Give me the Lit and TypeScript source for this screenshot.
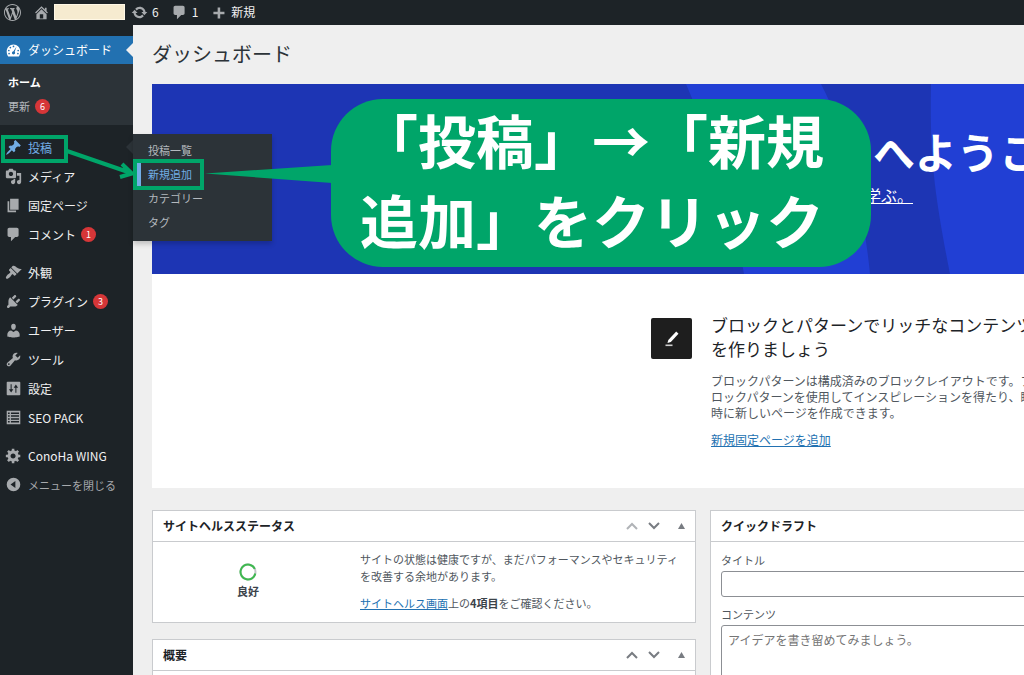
import { LitElement, html, svg, css, nothing } from "lit";
import { customElement, property } from "lit/decorators.js";
import { classMap } from "lit/directives/class-map.js";

const ICONS: Record<string, string> = {
  wordpress:
    "M20 10c0-5.51-4.49-10-10-10C4.48 0 0 4.49 0 10c0 5.52 4.48 10 10 10 5.51 0 10-4.48 10-10zM7.78 15.37L4.37 6.22c.55-.02 1.17-.08 1.17-.08.5-.06.44-1.13-.06-1.11 0 0-1.45.11-2.37.11-.18 0-.37 0-.58-.01C4.12 2.69 6.87 1.11 10 1.11c2.33 0 4.45.87 6.05 2.34-.68-.11-1.65.39-1.65 1.58 0 .74.45 1.36.9 2.1.35.61.55 1.36.55 2.46 0 1.49-1.4 5-1.4 5l-3.03-8.37c.54-.02.82-.17.82-.17.5-.05.44-1.25-.06-1.22 0 0-1.44.12-2.38.12-.87 0-2.33-.12-2.33-.12-.5-.03-.56 1.2-.06 1.22l.92.08 1.26 3.41zM17.41 10c.24-.64.74-1.87.43-4.25.7 1.29 1.05 2.71 1.05 4.25 0 3.29-1.73 6.24-4.4 7.78.97-2.59 1.94-5.2 2.92-7.78zM6.1 18.09C3.12 16.65 1.11 13.53 1.11 10c0-1.3.23-2.48.72-3.59C3.25 10.3 4.67 14.2 6.1 18.09zm4.03-6.63l2.58 6.98c-.86.29-1.76.45-2.71.45-.79 0-1.57-.11-2.29-.33.81-2.38 1.62-4.74 2.42-7.1z",
  home: "M16 8.5l1.53 1.53-1.06 1.06L10 4.6l-6.47 6.49-1.06-1.06L10 2.5l4 4v-2h2v4zm-6-2.46l6 5.99V18H4v-5.97zM12 17v-5H8v5h4z",
  update:
    "M10.2 3.28c3.53 0 6.43 2.61 6.92 6h2.08l-3.5 4-3.5-4h2.32c-.45-1.97-2.21-3.45-4.32-3.45-1.45 0-2.73.71-3.54 1.78L4.95 5.66C6.23 4.2 8.11 3.28 10.2 3.28zm-.4 13.44c-3.52 0-6.43-2.61-6.92-6H.8l3.5-4c1.17 1.33 2.33 2.67 3.5 4H5.48c.45 1.97 2.21 3.45 4.32 3.45 1.45 0 2.73-.71 3.54-1.78l1.71 1.95c-1.28 1.46-3.15 2.38-5.25 2.38z",
  comment:
    "M5 2h9c1.1 0 2 .9 2 2v7c0 1.1-.9 2-2 2h-2l-5 5v-5H5c-1.1 0-2-.9-2-2V4c0-1.1.9-2 2-2z",
  plus: "M17 9v3h-5v5H9v-5H4V9h5V4h3v5h5z",
  dashboard:
    "M3.76 17h12.48c1.34-1.63 1.76-3.74 1.76-6 0-4.41-3.58-8-8-8s-8 3.59-8 8c0 2.26.42 4.37 1.76 6zM10 4.2a1 1 0 1 1 0 2 1 1 0 0 1 0-2zM6.3 5.6a1 1 0 1 1 0 2 1 1 0 0 1 0-2zM4.5 9a1 1 0 1 1 0 2 1 1 0 0 1 0-2zM4.8 12.6a1 1 0 1 1 0 2 1 1 0 0 1 0-2zM15.5 9a1 1 0 1 1 0 2 1 1 0 0 1 0-2zM15.2 12.6a1 1 0 1 1 0 2 1 1 0 0 1 0-2zM13.6 5.4l-2.200 6.100c.4.4.6.8.5 1.400-.1 1-.9 1.700-1.900 1.700s-1.900-.8-1.800-1.900c.1-.9.800-1.600 1.800-1.700z",
  post: "M10.44 3.02l1.82-1.82 6.36 6.35-1.83 1.82c-1.05-.68-2.48-.57-3.41.36l-.75.75c-.92.93-1.04 2.35-.35 3.41l-1.83 1.82-2.41-2.41-2.8 2.79c-.42.42-3.38 2.71-3.8 2.29s1.86-3.39 2.28-3.81l2.79-2.79L4.1 9.36l1.83-1.82c1.05.69 2.48.57 3.4-.36l.75-.75c.93-.92 1.05-2.35.36-3.41z",
  media:
    "M13 11V4c0-.55-.45-1-1-1h-1.67L9 1H5L3.67 3H2c-.55 0-1 .45-1 1v7c0 .55.45 1 1 1h10c.55 0 1-.45 1-1zM7 4.5c1.38 0 2.5 1.12 2.5 2.5S8.38 9.5 7 9.5 4.5 8.38 4.5 7 5.62 4.5 7 4.5zM14 6h5v10.5c0 1.38-1.12 2.5-2.5 2.5S14 17.88 14 16.5s1.12-2.5 2.5-2.5c.17 0 .34.02.5.05V9h-3V6zm-4 8.05V13h2v3.5c0 1.38-1.12 2.5-2.5 2.5S7 17.88 7 16.5 8.12 14 9.5 14c.17 0 .34.02.5.05z",
  page: "M6 15V2h10v13H6zm-1 1h8v2H3V5h2v11z",
  appearance:
    "M14.48 11.06L7.41 3.99l1.5-1.5c.5-.56 2.3-.47 3.51.32 1.21.8 1.43 1.28 2.91 2.1 1.18.64 2.45 1.26 4.45.85zm-.71.71L6.7 4.7 4.93 6.47c-.39.39-.39 1.02 0 1.41l1.06 1.06c.39.39.39 1.03 0 1.42-.6.6-1.43 1.11-2.21 1.69-.35.26-.7.53-1.01.84C1.43 14.23.4 16.08 1.4 17.07c.99 1 2.84-.03 4.18-1.36.31-.31.58-.66.85-1.02.57-.78 1.08-1.61 1.69-2.21.39-.39 1.02-.39 1.41 0l1.06 1.06c.39.39 1.02.39 1.41 0z",
  plugin:
    "M13.11 4.36L9.87 7.6 8 5.73l3.24-3.24c.35-.34 1.05-.2 1.56.32.52.51.66 1.21.31 1.55zm-8 1.77l.91-1.12 9.01 9.01-1.19.84c-.71.71-2.63 1.16-3.82 1.16H6.14L4.9 17.26c-.59.59-1.54.59-2.12 0-.59-.58-.59-1.53 0-2.12l1.24-1.24v-3.88c0-1.13.4-3.19 1.09-3.89zm7.26 3.97l3.24-3.24c.34-.35 1.04-.21 1.55.31.52.51.66 1.21.31 1.55l-3.24 3.25z",
  user: "M10 9.25c-2.27 0-2.73-3.44-2.73-3.44C7 4.02 7.82 2 9.97 2c2.16 0 2.98 2.02 2.71 3.81 0 0-.41 3.44-2.68 3.44zm0 2.57L12.72 10c2.39 0 4.52 2.33 4.52 4.53v2.49s-3.65 1.13-7.24 1.13c-3.65 0-7.24-1.13-7.24-1.13v-2.49c0-2.25 1.94-4.48 4.47-4.48z",
  tools:
    "M16.68 9.77c-1.34 1.34-3.3 1.67-4.95.99l-5.41 6.52c-.99.99-2.59.99-3.58 0s-.99-2.59 0-3.57l6.52-5.42c-.68-1.65-.35-3.61.99-4.95 1.28-1.28 3.12-1.62 4.72-1.06l-2.89 2.89 2.82 2.82 2.86-2.87c.53 1.58.18 3.39-1.08 4.65zM3.81 16.21c.4.39 1.04.39 1.43 0 .4-.4.4-1.04 0-1.43-.39-.4-1.03-.4-1.43 0-.39.39-.39 1.03 0 1.43z",
  settings:
    "M18 17V3c0-.6-.4-1-1-1H3c-.6 0-1 .4-1 1v14c0 .6.4 1 1 1h14c.6 0 1-.4 1-1zM7.800 5v6h2l-2.600 3.600L4.600 11h2V5zM13.400 15h-1.200V9h-2l2.600-3.600L15.400 9h-2z",
  list: "M2 2h16v16H2zM3.500 4v1.800h2V4zM7 4v1.800h9.500V4zM3.500 7.400v1.800h2V7.400zM7 7.400v1.800h9.500V7.400zM3.500 10.800v1.800h2v-1.800zM7 10.800v1.800h9.500v-1.800zM3.500 14.200V16h2v-1.800zM7 14.200V16h9.500v-1.800z",
  gear: "M18 12h-2.18c-.17.7-.44 1.35-.81 1.93l1.54 1.54-2.1 2.1-1.54-1.54c-.58.36-1.23.63-1.91.79V19H8v-2.18c-.68-.16-1.33-.43-1.91-.79l-1.54 1.54-2.12-2.12 1.54-1.54c-.36-.58-.63-1.23-.79-1.91H1V9.03h2.17c.16-.7.44-1.35.8-1.94L2.43 5.55l2.1-2.1 1.54 1.54c.58-.37 1.24-.64 1.93-.81V2h3v2.18c.68.16 1.33.43 1.91.79l1.54-1.54 2.12 2.12-1.54 1.54c.36.59.64 1.24.8 1.94H18V12zm-8.5 1.5c1.66 0 3-1.34 3-3s-1.34-3-3-3-3 1.34-3 3 1.34 3 3 3z",
  collapse: "M10 2a8 8 0 1 1 0 16 8 8 0 0 1 0-16zM12.200 5.800L6.500 10l5.700 4.200z",
};

@customElement("wp-icon")
class WpIcon extends LitElement {
  @property() name = "";
  static styles = css`
    :host { display: block; flex: none; width: 17px; height: 17px; }
    svg { display: block; width: 100%; height: 100%; fill: currentColor; fill-rule: evenodd; }
  `;
  render() {
    return html`<svg viewBox="0 0 20 20" aria-hidden="true"><path d=${ICONS[this.name]}></path></svg>`;
  }
}

@customElement("wp-postbox")
class WpPostbox extends LitElement {
  @property() heading = "";
  @property({ type: Boolean }) first = false;
  static styles = css`
    :host { display: block; background: #fff; border: 1px solid #c9cbce; }
    header { display: flex; align-items: center; height: 30px; padding: 0 10px; border-bottom: 1px solid #c9cbce; }
    h2 { flex: 1; margin: 0; font-size: 12px; line-height: 20px; font-weight: 700; color: #1d2327; }
    button { width: 22px; height: 22px; padding: 0; border: 0; background: none; color: #787c82; display: grid; place-items: center; }
    .dim { color: #b0b3b7; }
    .toggle { margin-left: 5px; margin-right: -7px; }
    svg { display: block; }
  `;
  render() {
    return html`
      <header>
        <h2>${this.heading}</h2>
        <button class=${classMap({ dim: this.first })} aria-label="上に移動">
          <svg width="12" height="8" fill="none" stroke="currentColor" stroke-width="2"><path d="M1 7l5-5 5 5"></path></svg>
        </button>
        <button aria-label="下に移動">
          <svg width="12" height="8" fill="none" stroke="currentColor" stroke-width="2"><path d="M1 1l5 5 5-5"></path></svg>
        </button>
        <button class="toggle" aria-label="パネルを切り替え">
          <svg width="7" height="6" fill="currentColor"><path d="M3.500 0L7 6H0z"></path></svg>
        </button>
      </header>
      <slot></slot>
    `;
  }
}

interface Item { label: string; icon: string; badge?: number; open?: boolean }

const GROUPS: Item[][] = [
  [
    { label: "投稿", icon: "post", open: true },
    { label: "メディア", icon: "media" },
    { label: "固定ページ", icon: "page" },
    { label: "コメント", icon: "comment", badge: 1 },
  ],
  [
    { label: "外観", icon: "appearance" },
    { label: "プラグイン", icon: "plugin", badge: 3 },
    { label: "ユーザー", icon: "user" },
    { label: "ツール", icon: "tools" },
    { label: "設定", icon: "settings" },
    { label: "SEO PACK", icon: "list" },
  ],
  [{ label: "ConoHa WING", icon: "gear" }],
];

const FLYOUT = ["投稿一覧", "新規追加", "カテゴリー", "タグ"];

@customElement("app-root")
class AppRoot extends LitElement {
  static styles = css`
    :host {
      display: block; position: relative; height: 100vh; overflow: hidden;
      font-family: "Noto Sans CJK JP", "Noto Sans", sans-serif;
      font-size: 12px; line-height: 16px; color: #50575e; background: #efefef;
    }
    * { box-sizing: border-box; }
    a { color: #2271b1; }
    .bar { display: flex; align-items: center; height: 25px; padding: 0 0 1px 4px; background: #1d2327; color: #f0f0f1; }
    .bar a { display: flex; align-items: center; gap: 4px; color: inherit; text-decoration: none; }
    .bar wp-icon { color: #a7aaad; }
    .home { margin-left: 12px; }
    .site { width: 71px; height: 16px; margin-left: 4px; background: #f6ebd0; border: 1px solid #fff8e6; }
    .updates { margin-left: 6px; }
    .comments { margin-left: 12px; }
    .new { margin-left: 12px; }
    .frame { display: flex; height: calc(100vh - 25px); }
    nav { position: relative; flex: none; width: 133px; padding-top: 11px; background: #1d2327; }
    ul { list-style: none; margin: 0; padding: 0; }
    .group { padding-bottom: 9px; }
    .group:last-of-type { padding-bottom: 0; }
    .item { position: relative; }
    .link {
      display: flex; align-items: center; gap: 6px; width: 100%; height: 29px; padding: 0 0 0 5px;
      border: 0; background: none; font: inherit; color: #f0f0f1; text-decoration: none; text-align: left;
    }
    .link wp-icon { color: #a7aaad; }
    .current { position: relative; height: 28px; background: #2271b1; color: #fff; }
    .current wp-icon { color: #fff; }
    .current::after, .open::after {
      content: ""; position: absolute; right: 0; top: 7px;
      border: 7px solid transparent; border-left-width: 0; border-right-color: #efefef;
    }
    .open { color: #72aee6; }
    .open::after { border-right-color: #2c3338; }
    .open wp-icon { color: #72aee6; }
    .dim { color: #a7aaad; font-size: 11px; }
    .badge {
      display: grid; place-items: center; width: 15px; height: 15px; border-radius: 8px;
      margin-left: -1px; background: #d63638; color: #fff; font-size: 9px; line-height: 15px;
    }
    .sub { padding: 6px 0 7px; margin-bottom: 8px; background: #2c3338; font-size: 11px; }
    .sub a { display: flex; align-items: center; gap: 6px; height: 24px; padding-left: 8px; color: #b4b9be; text-decoration: none; }
    .sub .here { color: #fff; font-weight: 700; }
    .flyout {
      position: absolute; z-index: 2; left: 133px; top: 1px; width: 139px; padding: 4px 0 7px;
      background: #2c3338; box-shadow: 0 3px 5px rgba(0, 0, 0, .2); font-size: 11px;
    }
    .flyout a { display: block; height: 24px; padding-left: 11px; border-left: 4px solid transparent; line-height: 24px; color: #b4b9be; text-decoration: none; }
    .flyout .picked { color: #72aee6; border-left-color: #72aee6; margin-left: 4px; padding-left: 7px; }
    main { flex: 1; min-width: 0; overflow: hidden; padding: 13px 0 0 19px; }
    .content { min-width: 1102px; }
    h1 { margin: 0 0 14px; font-size: 20px; line-height: 32px; font-weight: 400; color: #2c3338; }
    .welcome { background: #fff; height: 404px; margin-bottom: 22px; }
    .banner { position: relative; height: 190px; padding: 43px 0 0 713px; background: #1d35b4; color: #fff; }
    .stripes { position: absolute; inset: 0; width: 1102px; height: 190px; fill: #213fd4; }
    .banner h2 { position: relative; margin: 0 0 8px 8px; font-size: 42px; line-height: 48px; font-weight: 700; white-space: nowrap; }
    .banner a { position: relative; font-size: 16px; line-height: 24px; color: #fff; }
    .feature { display: grid; grid-template-columns: 41px 327px; column-gap: 19px; padding: 39px 0 0 499px; }
    .tile { display: grid; place-items: center; width: 41px; height: 41px; margin-top: 5px; border-radius: 2px; background: #1e1e1e; }
    .feature h3 { margin: 0 0 12px; font-size: 17px; line-height: 24px; font-weight: 400; color: #1d2327; }
    .feature p { margin: 0 0 11px; line-height: 16px; }
    .boxes { display: grid; grid-template-columns: 1fr 1fr; gap: 14px; align-items: start; }
    .col { display: grid; gap: 16px; }
    .health { display: grid; grid-template-columns: 170px 1fr; column-gap: 27px; height: 80px; padding: 9px 10px 0; font-size: 11px; }
    .health p { margin: 0 0 10px; line-height: 17px; }
    .health b { color: #3c434a; }
    .status { display: grid; justify-items: center; align-content: start; gap: 2px; padding-top: 12px; font-weight: 700; color: #3c434a; }
    .empty { height: 60px; }
    form { display: grid; padding: 8px 10px; font-size: 11px; }
    label { line-height: 20px; padding-bottom: 1px; }
    input, textarea {
      width: 100%; border: 1px solid #8c8f94; border-radius: 3px; padding: 5px 6px;
      font: inherit; font-size: 12px; line-height: 18px; background: #fff; resize: none;
    }
    input { height: 26px; margin-bottom: 7px; }
    textarea { height: 90px; }
    textarea::placeholder { color: #757575; opacity: 1; }
    .marks { position: absolute; z-index: 3; left: 0; top: 0; width: 340px; height: 260px; fill: none; stroke: #00a569; stroke-width: 4; pointer-events: none; }
    .callout {
      position: absolute; z-index: 4; left: 331px; top: 99px; width: 540px; height: 168px; margin: 0;
      padding: 0 0 0 29px; border-radius: 52px; background: #00a569; color: #fff;
      font: 700 58px/80px "Noto Sans CJK JP", sans-serif;
    }
  `;

  private item(i: Item) {
    return html`<li class="item">
      <a href="#" class=${classMap({ link: true, open: !!i.open })}>
        <wp-icon name=${i.icon}></wp-icon><span>${i.label}</span>
        ${i.badge ? html`<span class="badge">${i.badge}</span>` : nothing}
      </a>
      ${i.open
        ? html`<div class="flyout">
            ${FLYOUT.map((t, n) => html`<a href="#" class=${classMap({ picked: n === 1 })}>${t}</a>`)}
          </div>`
        : nothing}
    </li>`;
  }

  render() {
    return html`
      <div class="bar">
        <a href="#" aria-label="WordPress"><wp-icon name="wordpress"></wp-icon></a>
        <a href="#" class="home" aria-label="サイト"><wp-icon name="home"></wp-icon></a>
        <div class="site"></div>
        <a href="#" class="updates"><wp-icon name="update"></wp-icon>6</a>
        <a href="#" class="comments"><wp-icon name="comment"></wp-icon>1</a>
        <a href="#" class="new"><wp-icon name="plus"></wp-icon>新規</a>
      </div>
      <div class="frame">
        <nav>
          <a href="#" class="link current"><wp-icon name="dashboard"></wp-icon><span>ダッシュボード</span></a>
          <div class="sub">
            <a href="#" class="here">ホーム</a>
            <a href="#">更新<span class="badge">6</span></a>
          </div>
          ${GROUPS.map((g) => html`<ul class="group">${g.map((i) => this.item(i))}</ul>`)}
          <button class="link dim"><wp-icon name="collapse"></wp-icon><span>メニューを閉じる</span></button>
        </nav>
        <main>
          <div class="content">
            <h1>ダッシュボード</h1>
            <section class="welcome">
              <div class="banner">
                <svg class="stripes" viewBox="0 0 1102 190" aria-hidden="true">
                  <path d="M534 0C560 60 580 125 592 190H718C712 130 698 55 669 0z"></path>
                  <path d="M779 0C778 65 780 100 798 190H1102V0z"></path>
                </svg>
                <h2>へようこそ!</h2>
                <a href="#">学ぶ。</a>
              </div>
              <div class="feature">
                <div class="tile">
                  <svg width="20" height="20" viewBox="0 0 20 20" fill="#fff" aria-hidden="true">
                    <path d="M14.200 2.500l2.300 2.300-7.700 8.300-3.300 1 .8-3.200z"></path>
                    <path d="M3.500 15.500h7v1.600h-7z" fill="#ccc"></path>
                  </svg>
                </div>
                <div>
                  <h3>ブロックとパターンでリッチなコンテンツを作りましょう</h3>
                  <p>ブロックパターンは構成済みのブロックレイアウトです。ブロックパターンを使用してインスピレーションを得たり、瞬時に新しいページを作成できます。</p>
                  <a href="#">新規固定ページを追加</a>
                </div>
              </div>
            </section>
            <div class="boxes">
              <div class="col">
                <wp-postbox heading="サイトヘルスステータス" first>
                  <div class="health">
                    <div class="status">
                      <svg width="18" height="18" fill="none" stroke-width="2" aria-hidden="true">
                        <circle cx="9" cy="9" r="7.500" stroke="#c3c4c7"></circle>
                        <circle cx="9" cy="9" r="7.500" stroke="#3fb950" stroke-dasharray="42 6" transform="rotate(12 9 9)"></circle>
                      </svg>
                      良好
                    </div>
                    <div>
                      <p>サイトの状態は健康ですが、まだパフォーマンスやセキュリティを改善する余地があります。</p>
                      <p><a href="#">サイトヘルス画面</a>上の<b>4項目</b>をご確認ください。</p>
                    </div>
                  </div>
                </wp-postbox>
                <wp-postbox heading="概要"><div class="empty"></div></wp-postbox>
              </div>
              <wp-postbox heading="クイックドラフト">
                <form>
                  <label for="title">タイトル</label>
                  <input id="title" type="text" />
                  <label for="body">コンテンツ</label>
                  <textarea id="body" placeholder="アイデアを書き留めてみましょう。"></textarea>
                </form>
              </wp-postbox>
            </div>
          </div>
        </main>
      </div>
      <svg class="marks" viewBox="0 0 340 260" aria-hidden="true">
        ${svg`<rect x="3" y="137" width="63" height="24"></rect>
        <rect x="135" y="161" width="67" height="27"></rect>
        <path d="M67 151L131 173M122 164L132 173.500 120 177"></path>
        <path d="M205 173.500L332 165V183z" fill="#00a569" stroke="none"></path>`}
      </svg>
      <p class="callout">「投稿」→「新規<br />追加」をクリック</p>
    `;
  }
}
